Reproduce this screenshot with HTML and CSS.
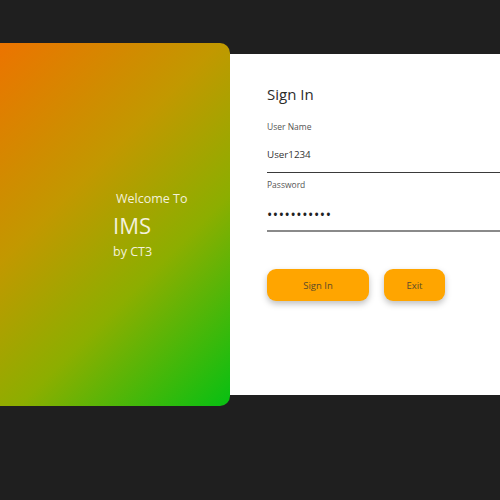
FILE: index.html
```html
<!DOCTYPE html>
<html>
<head>
<meta charset="utf-8">
<link rel="stylesheet" href="styles.css">
</head>
<body>
<div class="stage">
  <div class="hero">
    <div class="hero-text">
      <div class="welcome">Welcome To</div>
      <div class="brand">IMS</div>
      <div class="by">by CT3</div>
    </div>
  </div>
  <div class="card">
    <h1 class="title">Sign In</h1>
    <div class="field">
      <label class="label">User Name</label>
      <div class="value">User1234</div>
    </div>
    <div class="field field-pass">
      <label class="label">Password</label>
      <div class="value dots">•••••••••••</div>
    </div>
    <div class="actions">
      <button class="btn btn-primary">Sign In</button>
      <button class="btn btn-exit">Exit</button>
    </div>
  </div>
</div>
</body>
</html>
```
FILE: styles.css
```css
html, body {
  margin: 0;
  padding: 0;
  background: #1f1f1f;
  width: 500px;
  height: 500px;
  overflow: hidden;
  font-family: "Open Sans", "Noto Sans", sans-serif;
}
.stage {
  display: flex;
  align-items: center;
  padding-top: 43px;
  width: 500px;
}
.hero {
  flex: none;
  width: 240px;
  height: 363px;
  margin-left: -10px;
  border-radius: 10px;
  background: linear-gradient(135deg, #ee7200 0%, #c29800 38%, #8cae00 65%, #06c012 100%);
  display: flex;
  align-items: center;
  position: relative;
  z-index: 1;
}
.hero-text {
  padding-left: 123px;
  color: #f3f1dc;
  margin-top: 2px;
}
.welcome {
  font-size: 12.5px;
  padding-left: 3px;
  line-height: 18px;
}
.brand {
  font-size: 22px;
  line-height: 30px;
  margin-top: 2px;
  margin-bottom: 2px;
}
.by {
  font-size: 12.5px;
  line-height: 20px;
}
.card {
  flex: 1;
  height: 341px;
  background: #fff;
  padding-left: 37px;
  box-sizing: border-box;
  padding-top: 30px;
}
.title {
  margin: 0;
  font-weight: 400;
  font-size: 15px;
  line-height: 20px;
  color: #2b2b2b;
}
.field {
  margin-top: 17px;
  border-bottom: 1px solid #3a3a3a;
}
.field-pass {
  margin-top: 6px;
  border-bottom: 2px solid #8a8a8a;
}
.label {
  display: block;
  font-size: 8.5px;
  line-height: 12px;
  color: #555;
}
.value {
  font-size: 9.8px;
  line-height: 16px;
  padding: 14px 0 9px;
  color: #333;
}
.dots {
  font-size: 14px;
  letter-spacing: 0.6px;
  color: #222;
  padding: 16px 0 7px;
}
.actions {
  display: flex;
  gap: 15px;
  margin-top: 37px;
}
.btn {
  border: none;
  background: #ffa500;
  border-radius: 9px;
  height: 32px;
  font-family: "Open Sans", "Noto Sans", sans-serif;
  font-size: 9.5px;
  color: #5a4a2a;
  box-shadow: 0 3px 6px rgba(0, 0, 0, 0.25);
}
.btn-primary { width: 102px; }
.btn-exit { width: 61px; }
```
